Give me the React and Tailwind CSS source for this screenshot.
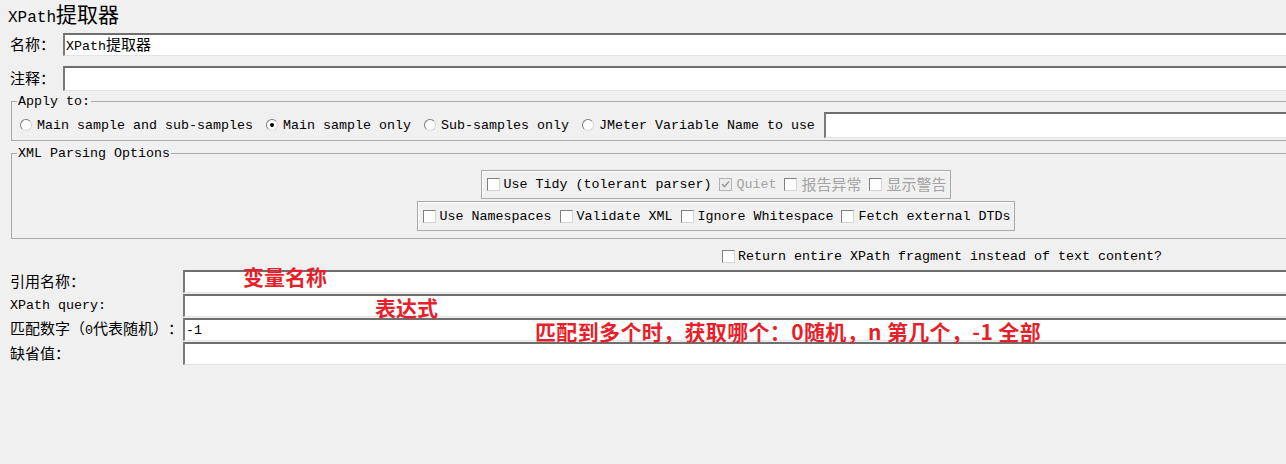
import React from "react";

const CJK = /([\u3000-\u303f\u4e00-\u9fff\uff00-\uffef]+)/;

// split mixed text so ascii gets the mono face and CJK gets its own width
function Txt({ children, big, gray }) {
  const parts = String(children).split(CJK).filter(Boolean);
  return (
    <span className={`whitespace-pre [text-spacing-trim:space-all] ${gray ? "text-[#a3a3a3]" : "text-black"}`}>
      {parts.map((p, i) =>
        CJK.test(p) ? (
          <span
            key={i}
            className={
              big
                ? "text-[21px] font-['Noto_Sans_CJK_SC',sans-serif]"
                : "text-[15px] font-['Noto_Sans_CJK_SC',sans-serif]"
            }
          >
            {p}
          </span>
        ) : (
          <span
            key={i}
            className={
              big
                ? "text-[16px] font-['Liberation_Mono',monospace]"
                : "text-[13.33px] font-['Liberation_Mono',monospace]"
            }
          >
            {p}
          </span>
        )
      )}
    </span>
  );
}

function Field({ value, h = "h-[23px]" }) {
  return (
    <div
      className={`flex-1 ${h} bg-white border-t-2 border-l-2 border-b border-t-[#6e6e6e] border-l-[#7a7a7a] border-b-[#e3e3e3] flex items-center pl-[1px] leading-[16px]`}
    >
      {value && <Txt>{value}</Txt>}
    </div>
  );
}

function Radio({ checked }) {
  return (
    <span className="w-[12px] h-[12px] rounded-full border border-t-[#7d7d7d] border-l-[#7d7d7d] border-b-[#d8d8d8] border-r-[#d8d8d8] bg-white flex items-center justify-center shrink-0">
      {checked && <span className="w-[4px] h-[4px] rounded-full bg-black" />}
    </span>
  );
}

function Check({ checked, disabled }) {
  return (
    <span
      className={`w-[13px] h-[13px] border flex items-center justify-center shrink-0 ${
        disabled && checked
          ? "border-[#b3b3b3] bg-[#ececec]"
          : "border-t-[#7f7f7f] border-l-[#7f7f7f] border-b-[#d6d6d6] border-r-[#d6d6d6] bg-white"
      }`}
    >
      {checked && (
        <svg width="9" height="9" viewBox="0 0 9 9">
          <path d="M1 4 L3.5 6.5 L8 1.5" fill="none" stroke="#9a9a9a" strokeWidth="1.6" />
        </svg>
      )}
    </span>
  );
}

function CheckItem({ label, checked, disabled }) {
  return (
    <div className="flex items-center gap-[4px] h-[16px]">
      <Check checked={checked} disabled={disabled} />
      <Txt gray={disabled}>{label}</Txt>
    </div>
  );
}

function RadioItem({ label, checked }) {
  return (
    <div className="flex items-center gap-[5px] mr-[13px]">
      <Radio checked={checked} />
      <Txt>{label}</Txt>
    </div>
  );
}

export default function App() {
  return (
    <div className="w-[1286px] h-[464px] overflow-hidden bg-[#f0f0f0] leading-[16px] font-['Liberation_Mono',monospace]">
      <div className="relative w-[1421px] flex flex-col">
        <div className="h-[33px] pl-[8px] leading-[26px]">
          <Txt big>XPath提取器</Txt>
        </div>

        <div className="flex items-center h-[23px]">
          <div className="w-[63px] pl-[10px] h-[16px] flex items-center">
            <Txt>名称：</Txt>
          </div>
          <Field value="XPath提取器" />
        </div>
        <div className="flex items-center h-[25px] mt-[10px]">
          <div className="w-[63px] pl-[10px] h-[16px] flex items-center">
            <Txt>注释：</Txt>
          </div>
          <Field h="h-[25px]" />
        </div>

        <fieldset className="ml-[11px] mt-[2px] border border-[#a9a9a9] p-0">
          <legend className="ml-[5px] px-[1px] h-[16px] leading-[16px]">
            <Txt>Apply to:</Txt>
          </legend>
          <div className="flex items-center pl-[8px] pt-[3px] pb-[2px]">
            <RadioItem label="Main sample and sub-samples" />
            <RadioItem label="Main sample only" checked />
            <RadioItem label="Sub-samples only" />
            <div className="flex items-center gap-[5px] mr-[9px]">
              <Radio />
              <Txt>JMeter Variable Name to use</Txt>
            </div>
            <Field h="h-[26px]" />
          </div>
        </fieldset>

        <fieldset className="ml-[11px] mt-[4px] border border-[#a9a9a9] p-0">
          <legend className="ml-[5px] px-[1px] h-[16px] leading-[16px]">
            <Txt>XML Parsing Options</Txt>
          </legend>
          <div className="flex flex-col items-center pt-[9px] pb-[7px] gap-[2px]">
            <div className="flex items-center h-[29px] border border-[#a9a9a9] shadow-[inset_1px_1px_0_#ffffff] pl-[5px] pr-[4px] gap-[8px]">
              <CheckItem label="Use Tidy (tolerant parser)" />
              <CheckItem label="Quiet" checked disabled />
              <CheckItem label="报告异常" disabled />
              <CheckItem label="显示警告" disabled />
            </div>
            <div className="flex items-center h-[30px] border border-[#a9a9a9] shadow-[inset_1px_1px_0_#ffffff] pl-[5px] pr-[4px] gap-[8px]">
              <CheckItem label="Use Namespaces" />
              <CheckItem label="Validate XML" />
              <CheckItem label="Ignore Whitespace" />
              <CheckItem label="Fetch external DTDs" />
            </div>
          </div>
        </fieldset>

        <div className="flex items-center h-[16px] mt-[9px] pl-[722px] gap-[3px]">
          <Check />
          <Txt>Return entire XPath fragment instead of text content?</Txt>
        </div>

        <div className="flex flex-col gap-[1px] mt-[6px]">
          {[
            ["引用名称：", ""],
            ["XPath query:", ""],
            ["匹配数字（0代表随机）：", "-1"],
            ["缺省值：", ""],
          ].map(([label, value]) => (
            <div key={label} className="flex items-center h-[23px]">
              <div className="w-[183px] pl-[10px] h-[16px] flex items-center">
                <Txt>{label}</Txt>
              </div>
              <Field value={value} />
            </div>
          ))}
        </div>

        {/* red notes drawn over the form */}
        <span className="absolute left-[243px] top-[266px] text-[21px] leading-[21px] font-bold text-[#e61f2b] font-['Noto_Sans_CJK_SC',sans-serif]">
          变量名称
        </span>
        <span className="absolute left-[375px] top-[297px] text-[21px] leading-[21px] font-bold text-[#e61f2b] font-['Noto_Sans_CJK_SC',sans-serif]">
          表达式
        </span>
        <span className="absolute left-[535px] top-[321px] text-[21px] leading-[21px] font-bold tracking-[0.35px] text-[#e61f2b] whitespace-pre [text-spacing-trim:space-all] font-['Noto_Sans_CJK_SC',sans-serif]">
          匹配到多个时，获取哪个：0随机，n 第几个，-1 全部
        </span>
      </div>
    </div>
  );
}
